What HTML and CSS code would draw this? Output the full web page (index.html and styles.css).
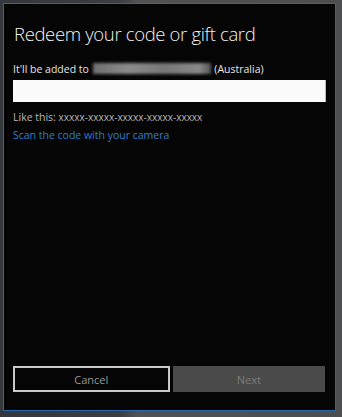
FILE: index.html
```html
<!DOCTYPE html>
<html>
<head>
<meta charset="utf-8">
<link rel="stylesheet" href="styles.css">
</head>
<body>
<div class="dialog">
  <h1 class="title">Redeem your code or gift card</h1>
  <div class="added">It'll be added to <span class="blurred" aria-hidden="true"></span> (Australia)</div>
  <div class="input"></div>
  <div class="hint">Like this: <span class="pattern">xxxxx-xxxxx-xxxxx-xxxxx-xxxxx</span></div>
  <a class="scan">Scan the code with your camera</a>
  <div class="spacer"></div>
  <div class="buttons">
    <button class="btn cancel">Cancel</button>
    <button class="btn next">Next</button>
  </div>
</div>
</body>
</html>
```

FILE: styles.css
```css
html, body {
  margin: 0;
  height: 100%;
}
body {
  box-sizing: border-box;
  padding: 3px 6px 6px 3px;
  background: linear-gradient(90deg, #34383d 0%, #3a3d41 35%, #505254 40%, #4c4e50 100%);
  font-family: "Open Sans", "Noto Sans", sans-serif;
  display: flex;
}
.dialog {
  flex: 1;
  border: 1px solid #2468b0;
  background: #050505;
  padding: 0 10px 18px 9px;
  display: flex;
  flex-direction: column;
}
.title {
  margin: 17px 0 0 1px;
  font-size: 18.5px;
  font-weight: 300;
  line-height: 26px;
  color: #f2f2f2;
  letter-spacing: -0.35px;
}
.added {
  margin-top: 14px;
  font-size: 10.5px;
  line-height: 16px;
  color: #e6e6e6;
}
.blurred {
  display: inline-block;
  width: 118px;
  height: 11px;
  vertical-align: -1px;
  background: linear-gradient(90deg, #6f6f6f, #8c8c8c 30%, #777 60%, #8a8a8a 90%, #555);
  filter: blur(1.5px);
  margin: 0 1px;
}
.input {
  margin-top: 3px;
  height: 22px;
  margin-right: -1px;
  background: #fbfbfb;
  border-right: 1px solid #bdbdbd;
}
.hint {
  margin-top: 8px;
  font-size: 10.5px;
  line-height: 15px;
  color: #b8b8b8;
}
.pattern {
  font-size: 10px;
}
.scan {
  margin-top: 2px;
  font-size: 10.5px;
  line-height: 16px;
  color: #2f7ed0;
}
.spacer {
  flex: 1;
}
.buttons {
  display: flex;
  gap: 3px;
}
.btn {
  flex: 1;
  height: 26px;
  font-family: inherit;
  font-size: 11px;
  padding: 0;
}
.cancel {
  background: #050505;
  border: 2px solid #c9c9c9;
  color: #9a9a9a;
}
.next {
  background: #4a4a4a;
  border: none;
  color: #7e7e7e;
}
```
